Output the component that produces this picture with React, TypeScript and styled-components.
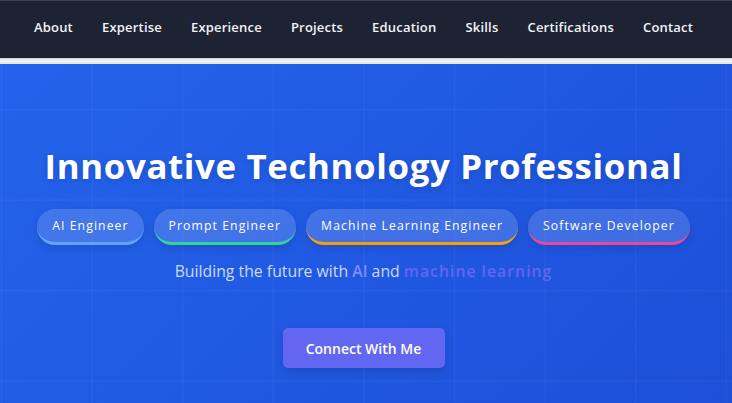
import React from "react";
import styled, { createGlobalStyle } from "styled-components";

const GlobalStyle = createGlobalStyle`
  html, body {
    margin: 0;
    padding: 0;
    background: #1d4ed8;
    font-family: "Open Sans", "Noto Sans", sans-serif;
    overflow: hidden;
  }
`;

const navLinks = [
  "About",
  "Expertise",
  "Experience",
  "Projects",
  "Education",
  "Skills",
  "Certifications",
  "Contact",
];

const roles = [
  { label: "AI Engineer", accent: "#60a5fa" },
  { label: "Prompt Engineer", accent: "#34d399" },
  { label: "Machine Learning Engineer", accent: "#f59e0b" },
  { label: "Software Developer", accent: "#ec4899" },
];

const App: React.FC = () => {
  return (
    <>
      <GlobalStyle />
      <Page>
        <Nav>
          <NavList>
            {navLinks.map((link) => (
              <NavItem key={link}>{link}</NavItem>
            ))}
          </NavList>
        </Nav>
        <Divider />
        <Hero>
          <Title>Innovative Technology Professional</Title>
          <Tags>
            {roles.map((role) => (
              <Tag key={role.label} accent={role.accent}>
                {role.label}
              </Tag>
            ))}
          </Tags>
          <Subtitle>
            Building the future with <Highlight>AI</Highlight> and{" "}
            <Strong>machine learning</Strong>
          </Subtitle>
          <ConnectButton>Connect With Me</ConnectButton>
        </Hero>
      </Page>
    </>
  );
};

export default App;

interface TagPropsTypes {
  accent: string;
}

const Page = styled.div`
  display: flex;
  flex-direction: column;
  min-height: 403px;
`;

const Nav = styled.nav`
  height: 57px;
  padding-right: 5px;
  background: #1e2334;
  border-top: 1px solid #3a3f4d;
  display: flex;
  align-items: center;
  justify-content: center;
`;

const NavList = styled.ul`
  list-style: none;
  margin: 0;
  padding: 0 0 5px;
  display: flex;
  gap: 29px;
`;

const NavItem = styled.li`
  color: #f1f3f7;
  font-size: 13px;
  font-weight: 600;
  letter-spacing: 0.2px;
`;

const Divider = styled.div`
  height: 6px;
  background: linear-gradient(#c9ccd3, #f2f3f5 40%, #e4e6ea);
`;

const Hero = styled.section`
  flex: 1;
  display: flex;
  flex-direction: column;
  align-items: center;
  padding: 80px 5px 0 0;
  background-color: #2160e6;
  background-image: linear-gradient(
      rgba(255, 255, 255, 0.045) 1px,
      transparent 1px
    ),
    linear-gradient(90deg, rgba(255, 255, 255, 0.045) 1px, transparent 1px),
    linear-gradient(135deg, #2463eb 0%, #1d4fd8 100%);
  background-size: 90.6px 90.6px, 90.6px 90.6px, 100% 100%;
  background-position: 1px 45px, 1px 45px, 0 0;
`;

const Title = styled.h1`
  margin: 0;
  color: #ffffff;
  font-size: 34.8px;
  font-weight: 700;
  letter-spacing: 0.65px;
  line-height: 44px;
  text-shadow: 0 2px 6px rgba(0, 0, 0, 0.15);
`;

const Tags = styled.div`
  display: flex;
  gap: 10px;
  margin-top: 21px;
`;

const Tag = styled.span<TagPropsTypes>`
  display: flex;
  align-items: center;
  height: 33px;
  padding: 0 15px;
  border-radius: 18px;
  background: rgba(255, 255, 255, 0.15);
  border-bottom: 3px solid ${(props) => props.accent};
  box-shadow: 0 3px 8px rgba(0, 0, 0, 0.12);
  color: #ffffff;
  font-size: 12.2px;
  letter-spacing: 1.1px;
`;

const Subtitle = styled.p`
  margin: 15px 0 0;
  color: rgba(255, 255, 255, 0.78);
  font-size: 15.8px;
  line-height: 22px;
`;

const Highlight = styled.span`
  color: #818cf8;
  font-weight: 600;
`;

const Strong = styled.span`
  color: #6366f1;
  font-weight: 600;
  letter-spacing: 1px;
`;

const ConnectButton = styled.button`
  margin-top: 46px;
  width: 162px;
  height: 40px;
  border: none;
  border-radius: 5px;
  background: #6366f1;
  color: #ffffff;
  font-family: "Open Sans", "Noto Sans", sans-serif;
  font-size: 14px;
  font-weight: 600;
  box-shadow: 0 4px 10px rgba(0, 0, 0, 0.12);
`;
